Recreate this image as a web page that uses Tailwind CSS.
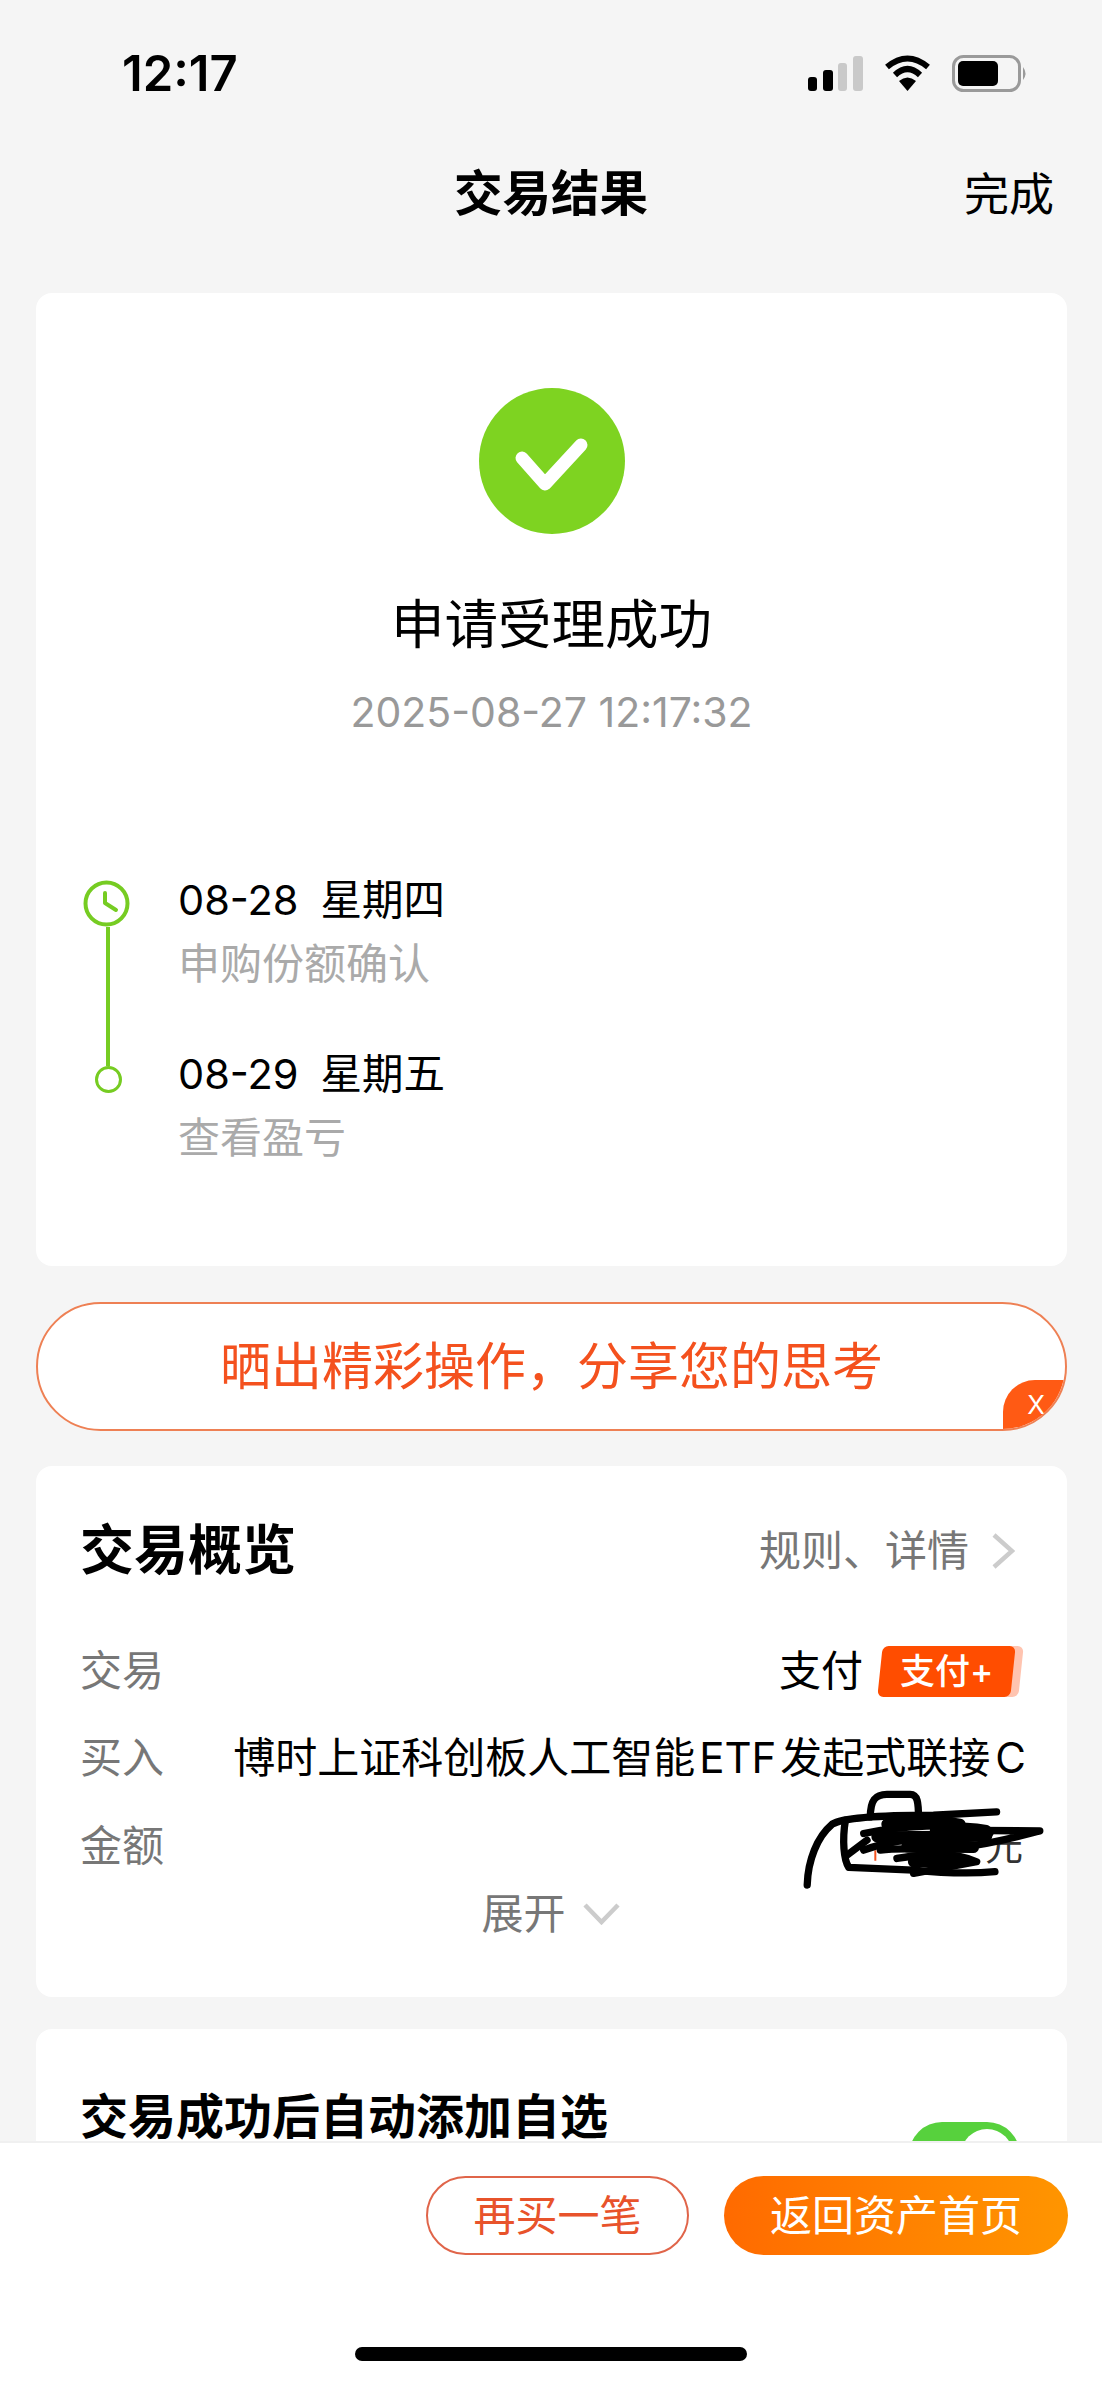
<!DOCTYPE html>
<html lang="zh-CN">
<head>
    <meta charset="UTF-8">
    <meta name="viewport" content="width=device-width, initial-scale=1.0">
    <title>交易结果</title>
    <script src="https://cdn.jsdelivr.net/npm/@tailwindcss/browser@4"></script>
</head>
<body class="bg-[#f5f5f5]">
    <div class="relative flex h-[2385px] w-[1102px] flex-col overflow-hidden bg-[#f5f5f5] font-['Inter','Noto_Sans_CJK_SC',sans-serif] text-black">

        <!-- status bar -->
        <div class="flex h-[146px] shrink-0 items-center justify-between pl-[122px] pr-[74px]">
            <span class="text-[49px] leading-none font-semibold">12:17</span>
            <div class="flex items-center gap-[21px]">
                <svg width="55" height="35" viewBox="0 0 55 35">
                    <rect x="0" y="21" width="9" height="14" rx="3" fill="#000"/>
                    <rect x="15" y="14" width="10" height="21" rx="3" fill="#000"/>
                    <rect x="30" y="7" width="9" height="28" rx="3" fill="#c9c9c9"/>
                    <rect x="45" y="0" width="10" height="35" rx="3" fill="#c9c9c9"/>
                </svg>
                <svg width="47" height="36" viewBox="0 0 47 36">
                    <path d="M3 12 Q23.5 -5 44 12" fill="none" stroke="#000" stroke-width="6"/>
                    <path d="M11 20 Q23.5 8 36 20" fill="none" stroke="#000" stroke-width="6"/>
                    <path d="M15 26 Q23.5 19 32 26 L23.5 36Z" fill="#000"/>
                </svg>
                <svg width="76" height="37" viewBox="0 0 76 37">
                    <rect x="1.5" y="1.5" width="66" height="34" rx="10" fill="none" stroke="#9a9a9a" stroke-width="3"/>
                    <rect x="6" y="6" width="40" height="25" rx="5" fill="#000"/>
                    <path d="M71 12 Q76 18.5 71 25Z" fill="#9a9a9a"/>
                </svg>
            </div>
        </div>

        <!-- nav -->
        <div class="relative flex h-[96px] shrink-0 items-center justify-center">
            <span class="text-[48.5px] leading-none font-bold">交易结果</span>
            <span class="absolute right-[48px] text-[45px] leading-none">完成</span>
        </div>

        <!-- result card -->
        <section class="ml-[36px] mt-[51px] h-[973px] w-[1031px] shrink-0 rounded-[16px] bg-white pt-[95px]">
            <svg class="mx-auto" width="146" height="146" viewBox="0 0 146 146">
                <circle cx="73" cy="73" r="73" fill="#7ed321"/>
                <path d="M43 70 L66 96 L102 57" fill="none" stroke="#fff" stroke-width="13" stroke-linecap="round" stroke-linejoin="round"/>
            </svg>
            <h1 class="mt-[56px] text-center text-[53.5px] leading-[70px]">申请受理成功</h1>
            <p class="mt-[27px] text-center text-[41px] leading-[50px] text-[#999]">2025-08-27 12:17:32</p>

            <div class="mt-[138px] flex pl-[47px]">
                <div class="flex w-[47px] flex-col items-center pt-[5px]">
                    <svg width="47" height="47" viewBox="0 0 47 47" class="shrink-0">
                        <circle cx="23.5" cy="23.5" r="21" fill="none" stroke="#76cc22" stroke-width="4"/>
                        <path d="M22 13 V23 L33 30" fill="none" stroke="#76cc22" stroke-width="4" stroke-linecap="round" stroke-linejoin="round"/>
                    </svg>
                    <div class="ml-[3px] h-[139px] w-[4px] bg-[#76cc22]"></div>
                    <div class="ml-[3px] h-[27px] w-[27px] rounded-full border-[3px] border-[#76cc22]"></div>
                </div>
                <div class="ml-[48px]">
                    <p class="flex gap-[22px] text-[41.5px] leading-[50px]"><span>08-28</span><span class="text-[41.5px]">星期四</span></p>
                    <p class="mt-[14px] text-[42px] leading-[50px] text-[#aaa]">申购份额确认</p>
                    <p class="mt-[60px] flex gap-[22px] text-[41.5px] leading-[50px]"><span>08-29</span><span class="text-[41.5px]">星期五</span></p>
                    <p class="mt-[14px] text-[42px] leading-[50px] text-[#aaa]">查看盈亏</p>
                </div>
            </div>
        </section>

        <!-- share banner -->
        <div class="relative ml-[36px] mt-[36px] flex h-[129px] w-[1031px] shrink-0 items-center justify-center overflow-hidden rounded-full border-2 border-[#ee8054] bg-white">
            <span class="text-[51px] leading-none text-[#f4511e]">晒出精彩操作，分享您的思考</span>
            <div class="absolute bottom-0 right-0 flex h-[49px] w-[62px] items-center justify-center rounded-tl-[32px] bg-[#ff5a14] pl-[4px] text-[26px] leading-none text-white">X</div>
        </div>

        <!-- overview card -->
        <section class="relative ml-[36px] mt-[35px] w-[1031px] shrink-0 rounded-[16px] bg-white pl-[44px] pr-[44px] pt-[55px] pb-[58px]">
            <div class="flex h-[60px] items-center justify-between">
                <h2 class="text-[54px] leading-none font-bold">交易概览</h2>
                <div class="flex items-center gap-[22px] pr-[8px]">
                    <span class="text-[42px] leading-none text-[#777]">规则、详情</span>
                    <svg width="24" height="38" viewBox="0 0 24 38">
                        <path d="M3 3 L21 19 L3 35" fill="none" stroke="#ccc" stroke-width="4.5"/>
                    </svg>
                </div>
            </div>

            <div class="mt-[65px] flex flex-col gap-[37px]">
                <div class="flex h-[50px] items-center justify-between">
                    <span class="text-[42px] leading-none text-[#777]">交易</span>
                    <div class="flex items-center gap-[17px]">
                        <span class="text-[42px] leading-none">支付</span>
                        <div class="relative mr-[10px] h-[51px] w-[133px]">
                            <div class="absolute inset-y-0 left-[8px] w-[133px] -skew-x-6 rounded-[6px] bg-[#ffc4b0]"></div>
                            <div class="absolute inset-0 flex -skew-x-6 items-center justify-center rounded-[6px] bg-[#ff4d00]">
                                <span class="skew-x-6 text-[35px] leading-none font-medium text-white">支付+</span>
                            </div>
                        </div>
                    </div>
                </div>
                <div class="flex h-[50px] items-center justify-between">
                    <span class="text-[42px] leading-none text-[#777]">买入</span>
                    <span class="-mr-[3px] text-[42px] leading-none whitespace-nowrap">博时上证科创板人工智能<span class="mx-[4px]">ETF</span>发起式联接<span class="ml-[5px]">C</span></span>
                </div>
                <div class="relative mt-[1px] flex h-[50px] items-center justify-between">
                    <span class="text-[42px] leading-none text-[#777]">金额</span>
                    <span class="text-[38px] leading-none text-[#333]">元</span>
                </div>
            </div>

            <div class="mt-[18px] flex h-[50px] items-center justify-center gap-[17px] pr-[2px]">
                <span class="text-[42px] leading-none text-[#777]">展开</span>
                <svg width="37" height="22" viewBox="0 0 37 22">
                    <path d="M2 2 L18.5 19 L35 2" fill="none" stroke="#ccc" stroke-width="4.5"/>
                </svg>
            </div>

            <!-- hand drawn redaction over the amount -->
            <svg class="absolute left-[764px] top-[321px]" width="247" height="103" viewBox="300 500 740 310">
                <path d="M525 690 V722 M560 662 H580 M720 665 V680" fill="none" stroke="#f4511e" stroke-width="6"/>
                <g fill="none" stroke="#000" stroke-linecap="round" stroke-linejoin="round">
                    <g stroke-width="22">
                        <path d="M320 795 C322 720 350 650 395 612 C430 590 560 585 700 585 L890 575"/>
                        <path d="M510 590 C510 540 525 522 560 522 L630 522 C652 522 655 545 655 595"/>
                        <path d="M435 600 C425 660 430 720 445 742 L640 750 C760 762 830 760 885 755"/>
                        <path d="M490 640 C600 615 760 610 860 625 C900 650 820 660 700 655 C600 655 530 675 490 690"/>
                        <path d="M700 630 L1020 632 C950 650 880 670 790 680 C700 695 620 680 540 690"/>
                        <path d="M440 705 L500 660 M590 715 C680 700 760 695 830 725 L640 760"/>
                    </g>
                    <g stroke-width="34">
                        <path d="M560 612 C640 596 720 602 780 612"/>
                        <path d="M530 650 L860 648"/>
                        <path d="M620 680 L820 682"/>
                        <path d="M640 725 L800 722"/>
                    </g>
                </g>
            </svg>
        </section>

        <!-- auto add card, runs under the footer -->
        <section class="ml-[36px] mt-[32px] flex h-[300px] w-[1031px] shrink-0 justify-between rounded-[16px] bg-white pl-[44px] pr-[47px] pt-[58px]">
            <h2 class="text-[48px] leading-[60px] font-bold">交易成功后自动添加自选</h2>
            <div class="mt-[35px] h-[66px] w-[111px] rounded-full bg-[#57d13d] p-[7px] pl-[52px]">
                <div class="h-[52px] w-[52px] rounded-full bg-white"></div>
            </div>
        </section>

        <!-- footer -->
        <footer class="absolute inset-x-0 bottom-0 flex h-[244px] flex-col border-t-2 border-[#f0f0f0] bg-white">
            <div class="flex justify-end gap-[35px] pr-[34px] pt-[33px]">
                <button class="h-[79px] w-[263px] rounded-full border-2 border-[#e0654a] text-[42px] leading-none text-[#e8532b]">再买一笔</button>
                <button class="h-[79px] w-[344px] rounded-full bg-gradient-to-r from-[#ff6a00] to-[#ff9500] text-[42px] leading-none text-white">返回资产首页</button>
            </div>
            <div class="mx-auto mt-[92px] h-[14px] w-[392px] rounded-full bg-black"></div>
        </footer>
    </div>
</body>
</html>
